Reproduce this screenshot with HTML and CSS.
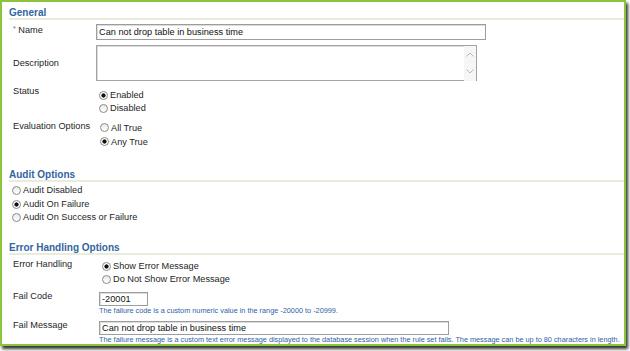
FILE: index.html
```html
<!DOCTYPE html>
<html>
<head>
<meta charset="utf-8">
<link rel="stylesheet" href="styles.css">
</head>
<body>
<div class="frame">
  <section class="sec sec-general">
    <h2 class="sec-title">General</h2>
    <div class="row row-name">
      <div class="lbl"><span class="req">*</span> Name</div>
      <input class="txt txt-name" type="text" value="Can not drop table in business time">
    </div>
    <div class="row row-desc">
      <div class="lbl">Description</div>
      <div class="textarea">
        <div class="ta-body"></div>
        <div class="ta-scroll">
          <svg width="12" height="9" viewBox="0 0 12 9"><path d="M2.5 6.5 L6 3 L9.5 6.5" fill="none" stroke="#b8b8b8" stroke-width="1"/></svg>
          <svg width="12" height="9" viewBox="0 0 12 9"><path d="M2.5 2.5 L6 6 L9.5 2.5" fill="none" stroke="#b8b8b8" stroke-width="1"/></svg>
        </div>
      </div>
    </div>
    <div class="row row-status">
      <div class="lbl">Status</div>
      <div class="opts opts-status">
        <label class="opt"><span class="radio on"></span>Enabled</label>
        <label class="opt"><span class="radio"></span>Disabled</label>
      </div>
    </div>
    <div class="row row-eval">
      <div class="lbl">Evaluation Options</div>
      <div class="opts opts-eval">
        <label class="opt"><span class="radio"></span>All True</label>
        <label class="opt"><span class="radio on"></span>Any True</label>
      </div>
    </div>
  </section>

  <section class="sec sec-audit">
    <h2 class="sec-title">Audit Options</h2>
    <div class="opts opts-audit">
      <label class="opt"><span class="radio"></span>Audit Disabled</label>
      <label class="opt"><span class="radio on"></span>Audit On Failure</label>
      <label class="opt"><span class="radio"></span>Audit On Success or Failure</label>
    </div>
  </section>

  <section class="sec sec-error">
    <h2 class="sec-title">Error Handling Options</h2>
    <div class="row row-handling">
      <div class="lbl lbl-wide">Error Handling</div>
      <div class="opts opts-handling">
        <label class="opt"><span class="radio on"></span>Show Error Message</label>
        <label class="opt"><span class="radio"></span>Do Not Show Error Message</label>
      </div>
    </div>
    <div class="row row-code">
      <div class="lbl lbl-wide">Fail Code</div>
      <div class="field">
        <input class="txt txt-code" type="text" value="-20001">
        <div class="help">The failure code is a custom numeric value in the range -20000 to -20999.</div>
      </div>
    </div>
    <div class="row row-msg">
      <div class="lbl lbl-wide">Fail Message</div>
      <div class="field">
        <input class="txt txt-msg" type="text" value="Can not drop table in business time">
        <div class="help">The failure message is a custom text error message displayed to the database session when the rule set fails. The message can be up to 80 characters in length.</div>
      </div>
    </div>
  </section>
</div>
</body>
</html>
```

FILE: styles.css
```css
html, body {
  margin: 0;
  padding: 0;
  background: #ffffff;
}

body {
  font-family: "Liberation Sans", Arial, sans-serif;
  font-size: 9.2px;
  color: #262626;
  width: 630px;
  height: 351px;
  overflow: hidden;
}

.frame {
  box-sizing: border-box;
  width: 626px;
  height: 346px;
  border: 2px solid #8cc43c;
  box-shadow: 2px 3px 3px rgba(30, 30, 30, 0.9);
  background: #ffffff;
  overflow: hidden;
}

.sec {
  margin-left: 7px;
}

.sec-title {
  margin: 0;
  padding-top: 5px;
  font-size: 10px;
  line-height: 11px;
  font-weight: bold;
  color: #33649f;
  border-bottom: 2px solid #e9ebdc;
}

.row {
  display: flex;
  align-items: flex-start;
  padding-left: 4px;
}

.lbl {
  width: 83px;
  flex: none;
  line-height: 11px;
  white-space: nowrap;
}

.lbl-wide {
  width: 86px;
}

.req {
  color: #5a6f8a;
  font-size: 7px;
  position: relative;
  top: -2px;
}

.txt {
  box-sizing: border-box;
  margin: 0;
  font-family: "Liberation Sans", Arial, sans-serif;
  font-size: 9.2px;
  color: #111111;
  border: 1px solid #9d9d9d;
  box-shadow: inset 1px 1px 0 #dcdcdc;
  padding: 0 0 0 2px;
  background: #ffffff;
  outline: none;
}

/* General */
.row-name {
  margin-top: 4px;
}
.row-name .lbl {
  padding-top: 1px;
}
.txt-name {
  width: 390px;
  height: 16px;
}

.row-desc {
  margin-top: 5px;
  align-items: center;
}
.textarea {
  box-sizing: border-box;
  width: 381px;
  height: 36px;
  display: flex;
  border: 1px solid #a3a3a3;
  border-bottom: none;
  box-shadow: inset 1px 1px 0 #dcdcdc;
}
.ta-body {
  flex: 1;
  border-bottom: 1px solid #a3a3a3;
}
.ta-scroll {
  width: 12px;
  background: #f6f6f6;
  display: flex;
  flex-direction: column;
  justify-content: space-between;
  padding: 4px 0 5px;
}
.ta-scroll svg {
  display: block;
}

.opts {
  display: flex;
  flex-direction: column;
}
.opt {
  display: flex;
  align-items: center;
  white-space: nowrap;
  line-height: 13px;
}

.radio {
  box-sizing: border-box;
  width: 9px;
  height: 9px;
  border: 1px solid #8a8a8a;
  border-radius: 50%;
  background: linear-gradient(#e9e9e9, #ffffff);
  margin-right: 2px;
  flex: none;
}
.radio.on {
  background: radial-gradient(circle, #111111 0 1.8px, #ffffff 2.4px);
}

.row-status {
  margin-top: 5px;
}
.opts-status {
  padding-top: 2.5px;
  padding-left: 3px;
}

.row-eval {
  margin-top: 6px;
}
.opts-eval {
  padding-left: 4px;
}
.opts-eval .opt {
  line-height: 14px;
}

/* Audit */
.sec-audit .sec-title {
  margin-top: 15px;
}
.opts-audit {
  margin-top: 2.5px;
  padding-left: 3px;
}
.opts-audit .opt {
  line-height: 13.5px;
}

/* Error handling */
.sec-error .sec-title {
  margin-top: 12px;
}
.row-handling {
  margin-top: 4px;
}
.opts-handling {
  padding-top: 1.5px;
  padding-left: 3px;
}
.opts-handling .opt {
  line-height: 13px;
}

.row-code {
  margin-top: 5px;
}
.field {
  display: flex;
  flex-direction: column;
}
.txt-code {
  margin-top: 0.5px;
  width: 49px;
  height: 14px;
}
.row-msg {
  margin-top: 5px;
}
.txt-msg {
  margin-top: 1.5px;
  width: 350px;
  height: 14px;
}
.help {
  font-size: 7.3px;
  line-height: 9px;
  color: #2f62a6;
  white-space: nowrap;
}
```
